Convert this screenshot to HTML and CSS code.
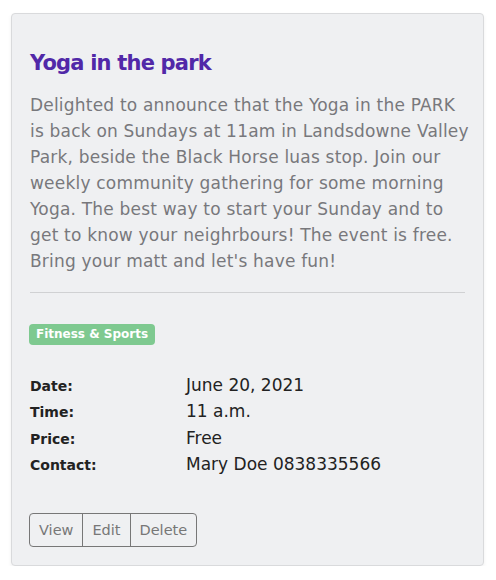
FILE: index.html
```html
<!DOCTYPE html>
<html>
<head>
<meta charset="utf-8">
<link rel="stylesheet" href="styles.css">
</head>
<body>
<div class="card">
  <h2 class="title">Yoga in the park</h2>
  <p class="desc">Delighted to announce that the Yoga in the PARK is back on Sundays at 11am in Landsdowne Valley Park, beside the Black Horse luas stop. Join our weekly community gathering for some morning Yoga. The best way to start your Sunday and to get to know your neighrbours! The event is free. Bring your matt and let's have fun!</p>
  <hr class="divider">
  <span class="badge">Fitness &amp; Sports</span>
  <dl class="details">
    <dt>Date:</dt><dd>June 20, 2021</dd>
    <dt>Time:</dt><dd>11 a.m.</dd>
    <dt>Price:</dt><dd>Free</dd>
    <dt>Contact:</dt><dd>Mary Doe 0838335566</dd>
  </dl>
  <div class="btn-group">
    <button class="btn">View</button>
    <button class="btn">Edit</button>
    <button class="btn">Delete</button>
  </div>
</div>
</body>
</html>
```
FILE: styles.css
```css
html, body { margin: 0; padding: 0; background: #fff; }
body {
  padding: 13px 13px 0 11px;
  font-family: "DejaVu Sans", "Open Sans", sans-serif;
}
.card {
  width: 473px;
  box-sizing: border-box;
  background: #eff0f2;
  border: 1px solid #d9dadc;
  border-radius: 4px;
  box-shadow: 0 2px 4px rgba(0,0,0,0.06);
  padding: 32px 18px 18px 18px;
}
.title {
  margin: 0 0 12px 0;
  font-size: 21px;
  letter-spacing: -0.8px;
  line-height: 34px;
  font-weight: 700;
  color: #5128a8;
}
.desc {
  margin: 0 -9px 0 0;
  font-size: 17px;
  letter-spacing: 0.2px;
  line-height: 26px;
  color: #78787c;
}
.divider {
  border: 0;
  border-top: 1px solid #d0d1d3;
  margin: 18px 0 30px 0;
}
.badge {
  display: inline-block;
  margin-left: -1px;
  background: #7ec990;
  color: #fff;
  font-weight: 700;
  font-size: 12px;
  line-height: 21px;
  padding: 0 7px;
  border-radius: 4px;
}
.details {
  display: grid;
  grid-template-columns: 156px 1fr;
  align-items: baseline;
  margin: 27px 0 0 0;
}
.details dt {
  font-weight: 700;
  font-size: 14px;
  line-height: 20px;
  color: #222;
}
.details dd {
  margin: 0;
  font-size: 17px;
  line-height: 26.3px;
  color: #222;
}
.btn-group {
  display: flex;
  margin-top: 36px;
}
.btn {
  font-family: inherit;
  font-size: 14.5px;
  color: #777;
  background: transparent;
  border: 1px solid #777;
  padding: 6px 9px;
  line-height: 20px;
  margin: 0;
}
.btn:first-child { margin-left: -1px; }
.btn + .btn { margin-left: -1px; }
.btn:first-child { border-radius: 4px 0 0 4px; }
.btn:last-child { border-radius: 0 4px 4px 0; }
```
